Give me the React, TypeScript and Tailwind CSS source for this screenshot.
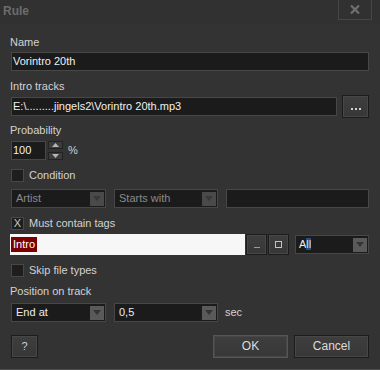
import React from 'react';

function Arrow({ dim }: { dim?: boolean }) {
  return (
    <div className={`w-[14px] h-[14px] flex items-center justify-center ${dim ? 'bg-[#4a4a4a]' : 'bg-[#5a5a5a]'}`}>
      <svg width="8" height="5" viewBox="0 0 8 5">
        <path d="M0 0 L8 0 L4 5 Z" fill={dim ? '#393939' : '#343434'} />
      </svg>
    </div>
  );
}

function Select({ value, width, dim, grow }: any) {
  return (
    <div
      className={`h-[19px] flex items-center justify-between bg-[#1b1b1b] border border-[#474747] pl-[4px] pr-[1px] ${grow ? 'flex-1' : ''}`}
      style={width ? { width } : undefined}
    >
      <span className={dim ? 'text-[#8a8a8a]' : 'text-[#ececec]'}>{value}</span>
      <Arrow dim={dim} />
    </div>
  );
}

function Check({ label, checked }: { label: string; checked?: boolean }) {
  return (
    <div className="h-[13px] flex items-center">
      <div className="w-[13px] h-[13px] bg-[#1e1e1e] border border-[#484848] flex items-center justify-center text-[#c8c8c8] text-[11px] leading-none">
        {checked ? 'X' : ''}
      </div>
      <span className="ml-[5px] text-[#d2d2d2]">{label}</span>
    </div>
  );
}

function Btn({ children, className = '' }: any) {
  return (
    <div className={`h-[23px] flex items-center justify-center bg-gradient-to-b from-[#3e3e3e] to-[#373737] border border-[#1c1c1c] text-[#dcdcdc] shadow-[inset_0_0_0_1px_#474747] ${className}`}>
      {children}
    </div>
  );
}

export default function App() {
  return (
    <div className="w-[380px] h-[370px] bg-[#333333] border-b border-[#4e4e4e] flex flex-col text-[11px] leading-[13px] overflow-hidden" style={{ fontFamily: '"Liberation Sans", Arial, sans-serif' }}>
      {/* title bar */}
      <div className="h-[24px] flex items-start justify-between bg-[#313131]">
        <span className="pl-[3px] pt-[5px] text-[12px] font-bold text-[#6c6c6c]">Rule</span>
        <div className="mr-[8px] w-[34px] h-[20px] border border-[#474747] border-t-0 flex items-center justify-center">
          <svg width="10" height="9" viewBox="0 0 10 9">
            <path d="M1 0.5 L9 8.5 M9 0.5 L1 8.5" stroke="#6f6f6f" strokeWidth="2.2" />
          </svg>
        </div>
      </div>

      <div className="flex flex-col px-[11px]">
        <span className="mt-[12px] -ml-[1px] text-[#d2d2d2]">Name</span>
        <div className="mt-[3px] h-[19px] bg-[#1b1b1b] border border-[#474747] flex items-center pl-[1px] text-[#f0f0f0]">Vorintro 20th</div>

        <span className="mt-[9px] -ml-[1px] text-[#d2d2d2]">Intro tracks</span>
        <div className="mt-[2px] h-[23px] flex items-center">
          <div className="flex-1 h-[19px] bg-[#1b1b1b] border border-[#474747] flex items-center pl-[1px] text-[#f0f0f0]">E:\.........jingels2\Vorintro 20th.mp3</div>
          <Btn className="ml-[5px] w-[27px]">
            <div className="flex gap-[2px] mt-[5px]">
              <div className="w-[2px] h-[2px] bg-[#cfcfcf]" />
              <div className="w-[2px] h-[2px] bg-[#cfcfcf]" />
              <div className="w-[2px] h-[2px] bg-[#cfcfcf]" />
            </div>
          </Btn>
        </div>

        <span className="mt-[6px] -ml-[1px] text-[#d2d2d2]">Probability</span>
        <div className="mt-[4px] h-[19px] flex items-center">
          <div className="w-[35px] h-[19px] bg-[#1b1b1b] border border-[#474747] flex items-center pl-[1px] text-[#f0f0f0]">100</div>
          <div className="ml-[2px] w-[15px] h-[19px] flex flex-col justify-between">
            <div className="h-[8px] bg-[#3c3c3c] border border-[#222] flex items-center justify-center">
              <svg width="7" height="4" viewBox="0 0 7 4"><path d="M0 4 L7 4 L3.5 0 Z" fill="#b5b5b5" /></svg>
            </div>
            <div className="h-[8px] bg-[#3c3c3c] border border-[#222] flex items-center justify-center">
              <svg width="7" height="4" viewBox="0 0 7 4"><path d="M0 0 L7 0 L3.5 4 Z" fill="#b5b5b5" /></svg>
            </div>
          </div>
          <span className="ml-[5px] text-[#d2d2d2]">%</span>
        </div>

        <div className="mt-[9px]"><Check label="Condition" /></div>
        <div className="mt-[7px] flex items-center">
          <Select value="Artist" width={95} dim />
          <div className="ml-[8px]"><Select value="Starts with" width={104} dim /></div>
          <div className="ml-[8px] flex-1 h-[19px] bg-[#1b1b1b] border border-[#474747]" />
        </div>

        <div className="mt-[9px]"><Check label="Must contain tags" checked /></div>
        <div className="mt-[4px] h-[21px] flex items-center">
          <div className="-ml-[1px] w-[235px] h-[21px] bg-[#f7f7f7] flex items-center pl-[1px]">
            <span className="h-[15px] px-[2px] bg-[#7d0000] text-white flex items-center">Intro</span>
          </div>
          <Btn className="ml-[1px] w-[21px] !h-[21px]">
            <div className="w-[6px] h-[1px] bg-[#9a9a9a] mt-[6px]" />
          </Btn>
          <Btn className="ml-[1px] w-[21px] !h-[21px]">
            <div className="w-[7px] h-[7px] border border-[#c4c4c4]" />
          </Btn>
          <div className="ml-[6px] flex-1">
            <div className="h-[19px] flex items-center justify-between bg-[#1b1b1b] border border-[#474747] pl-[3px] pr-[1px]">
              <span className="text-[#f0f0f0]">A<span className="text-[#cfe0f5] bg-[#2b4f7a]">ll</span></span>
              <Arrow />
            </div>
          </div>
        </div>

        <div className="mt-[9px]"><Check label="Skip file types" /></div>
        <span className="mt-[8px] -ml-[1px] text-[#d2d2d2]">Position on track</span>
        <div className="mt-[5px] flex items-center">
          <Select value="End at" width={95} />
          <div className="ml-[8px]"><Select value="0,5" width={104} /></div>
          <span className="ml-[7px] text-[#d2d2d2]">sec</span>
        </div>

        <div className="mt-[13px] flex items-center">
          <Btn className="w-[27px]"><span className="text-[#cfcfcf]">?</span></Btn>
          <div className="flex-1" />
          <Btn className="w-[75px] !border-[#3f5c68]"><span className="text-[12px]">OK</span></Btn>
          <Btn className="ml-[6px] w-[75px]"><span className="text-[12px]">Cancel</span></Btn>
        </div>
      </div>
    </div>
  );
}
